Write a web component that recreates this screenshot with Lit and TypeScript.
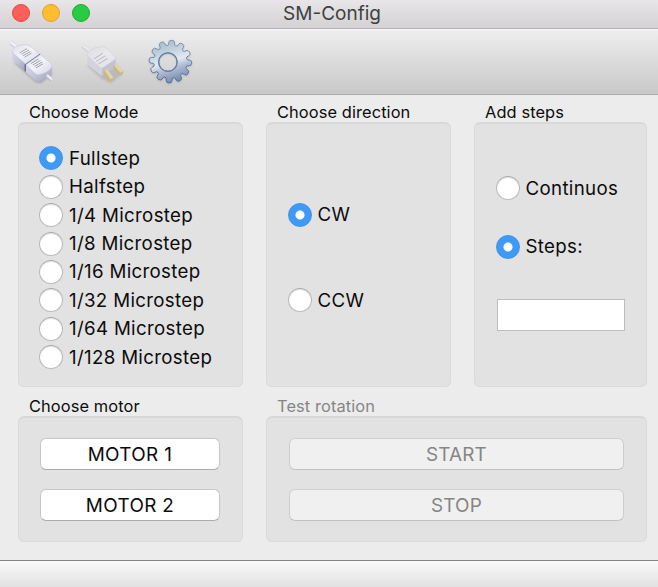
import { LitElement, html, css, svg } from "lit";
import { customElement, property } from "lit/decorators.js";

/** Outline of a cog with round-tipped teeth, centred on the origin. */
function cogPath(teeth: number, outer: number, root: number, offset: number): string {
  const step = 360 / teeth;
  const at = (r: number, deg: number) => {
    const a = ((deg - 90) * Math.PI) / 180;
    return `${(r * Math.cos(a)).toFixed(2)} ${(r * Math.sin(a)).toFixed(2)}`;
  };
  let d = "";
  for (let i = 0; i < teeth; i++) {
    const c = offset + i * step;
    d += `${i ? "L" : "M"}${at(root, c - step * 0.34)}`;
    d += `L${at(outer - 2.2, c - step * 0.29)}`;
    d += `Q${at(outer, c - step * 0.27)} ${at(outer, c)}`;
    d += `Q${at(outer, c + step * 0.27)} ${at(outer - 2.2, c + step * 0.29)}`;
    d += `L${at(root, c + step * 0.34)}`;
    d += `Q${at(root - 1, c + step * 0.5)} ${at(root, c + step * 0.66)}`;
  }
  return d + "Z";
}

const connectIcon = svg`
  <defs>
    <linearGradient id="c-top" x1="0" y1="0" x2="1" y2="1">
      <stop offset="0" stop-color="#dcdcea" /><stop offset=".45" stop-color="#f3f3fa" /><stop offset="1" stop-color="#d6d6e8" />
    </linearGradient>
    <linearGradient id="c-side" x1="0" y1="0" x2="1" y2="1">
      <stop offset="0" stop-color="#dadae8" /><stop offset=".5" stop-color="#c4c4d8" /><stop offset="1" stop-color="#9c9cba" />
    </linearGradient>
    <filter id="c-soft" x="-20%" y="-20%" width="140%" height="140%"><feGaussianBlur stdDeviation="1.2" /></filter>
  </defs>
  <path d="M8 27 L31 47.5 L36 48 L47 40 L46 34Z" fill="#666" opacity=".4" filter="url(#c-soft)" />
  <path d="M5.5 7.5 L14 14" stroke="#cfcfdb" stroke-width="4.4" />
  <path d="M5.8 7.2 L14 13.4" stroke="#f0f0f6" stroke-width="2.6" />
  <path d="M7 15 L7.3 25 L19.6 36 L21 29Z" fill="url(#c-side)" />
  <path d="M7 15.5 Q8 12.5 14 10.2 L21.5 9.6 Q23 9.8 25 11 L34.8 19 L20.6 29 L8.5 18.5Z" fill="url(#c-top)" stroke="#c3c3d6" stroke-width=".5" />
  <path d="M20.6 29.6 L20.3 36.5 L30 45.8 Q32 47.4 35 46.6 L45.5 39.5 Q46.6 38.5 46.8 36 L47.2 31 L33 38.5Z" fill="url(#c-side)" />
  <path d="M20.8 29.8 L35.4 19.6 L46 28.4 Q48 30.5 46.6 32.5 Q43 37.5 35 39.6 Q32 40.4 30 38.6Z" fill="url(#c-top)" stroke="#c0c0d5" stroke-width=".5" />
  <path d="M20.6 29.2 L35.2 19" stroke="#85859e" stroke-width="1" />
  <path d="M20.3 29.2 V36.6" stroke="#66668c" stroke-width="1.3" />
  <path d="M14.5 18 L22 13.5 M16.3 19.4 L24 14.9 M18 20.8 L25.5 16.4 M19.6 22.2 L26.5 18" stroke="#a4a4b3" stroke-width="1" />
  <path d="M26 28.5 L33.5 24 M27.8 30 L35.5 25.5 M29.5 31.4 L37.2 27 M31 32.8 L38 28.8" stroke="#9d9db0" stroke-width="1" />
  <path d="M41.5 40.5 L46.5 45" stroke="#bcbcd2" stroke-width="4" />
  <path d="M42 40 L47 44.4" stroke="#f0f2fb" stroke-width="2" />`;

const plugIcon = svg`
  <defs>
    <linearGradient id="p-top" x1="0" y1="0" x2="1" y2="1">
      <stop offset="0" stop-color="#dcdce2" /><stop offset=".5" stop-color="#e9e9ee" /><stop offset="1" stop-color="#dedee5" />
    </linearGradient>
    <filter id="p-soft" x="-20%" y="-20%" width="140%" height="140%"><feGaussianBlur stdDeviation="1.2" /></filter>
  </defs>
  <path d="M12 30 L28 44 L37 48 L49 39 L42 32Z" fill="#777" opacity=".28" filter="url(#p-soft)" />
  <path d="M8.3 10.8 L18 18" stroke="#d3d3d9" stroke-width="4.2" />
  <path d="M8.6 10.2 L18 17.2" stroke="#e8e8ed" stroke-width="2.6" />
  <path d="M13.2 19 L13.6 29.5 L27.6 41 L28.4 32.5Z" fill="#d3d3dc" />
  <path d="M27.6 41 L41.2 32.6 L41.9 23.3 L28.4 32.5Z" fill="#c3c3cf" />
  <path d="M13 20 Q13.5 16 20 13 L27 11.8 Q30 11.4 32 13.2 L41.9 22.3 L41.4 24.2 L28.8 32.8 Q27.4 33.4 26 32.2Z" fill="url(#p-top)" stroke="#cdcdd6" stroke-width=".5" />
  <path d="M19.8 24 L28.8 18.3 M21.9 26.6 L31.4 20.8 M24.3 29 L33.5 23.5" stroke="#bfbfc9" stroke-width="1.1" />
  <path d="M29 36.5 L33 33.8 L39.5 42.5 L38.5 45.5 L36 47 L33.5 45.4Z" fill="#c9b788" />
  <path d="M30.6 35.6 L33 33.8 L39.5 42.5 L36.6 44.2Z" fill="#e2d4ac" />
  <path d="M38.6 31.6 L42.4 28.6 L49.3 36 L49 38.4 L46 40.4 L43.4 38.8Z" fill="#c9b788" />
  <path d="M40 30.6 L42.4 28.6 L49.3 36 L46.4 37.8Z" fill="#e2d4ac" />`;

const gearIcon = svg`
  <defs>
    <linearGradient id="g-fill" gradientUnits="userSpaceOnUse" x1="-6" y1="-22" x2="8" y2="21">
      <stop offset="0" stop-color="#a3bacb" /><stop offset=".25" stop-color="#c0d0dd" />
      <stop offset=".5" stop-color="#e3e8f2" /><stop offset=".66" stop-color="#b0bdd5" /><stop offset="1" stop-color="#6a84ac" />
    </linearGradient>
    <linearGradient id="g-edge" x1="0" y1="0" x2="0" y2="1">
      <stop offset="0" stop-color="#7d99ac" /><stop offset="1" stop-color="#566c92" />
    </linearGradient>
    <filter id="g-soft" x="-20%" y="-20%" width="140%" height="140%"><feGaussianBlur stdDeviation="0.9" /></filter>
  </defs>
  <g transform="translate(27.4 26.6)">
    <path fill-rule="evenodd" fill="#666" opacity=".3" filter="url(#g-soft)" transform="translate(0 1)"
      d="${cogPath(12, 21.6, 17, 4)}M6.7 .5A9.2 9.2 0 1 0 -11.7 .5A9.2 9.2 0 1 0 6.7 .5Z" />
    <path fill-rule="evenodd" fill="url(#g-fill)" stroke="url(#g-edge)" stroke-width="1"
      d="${cogPath(12, 21.4, 17, 4)}M6.7 .5A9.2 9.2 0 1 0 -11.7 .5A9.2 9.2 0 1 0 6.7 .5Z" />
    <circle cx="-2.5" cy=".5" r="9.3" fill="none" stroke="#66829c" stroke-width="1.2" />
  </g>`;

@customElement("radio-option")
class RadioOption extends LitElement {
  @property() label = "";
  @property({ type: Boolean }) checked = false;

  static styles = css`
    :host {
      display: flex;
      align-items: center;
      height: 28.45px;
      gap: 6px;
      font-size: 18.7px;
      letter-spacing: 0.33px;
      white-space: nowrap;
    }
    .dot {
      box-sizing: border-box;
      flex: none;
      width: 24px;
      height: 24px;
      border: 1px solid #b9b9b9;
      border-top-color: #a9a9a9;
      border-radius: 50%;
      background: #fff;
      box-shadow: inset 0 1px 1px #ddd;
    }
    .on {
      border: 1px solid #3b93ee;
      background: radial-gradient(circle, #fff 4px, #3f9af6 5px);
      box-shadow: none;
    }
  `;

  render() {
    return html`<span class="dot ${this.checked ? "on" : ""}"></span><span>${this.label}</span>`;
  }
}

@customElement("group-box")
class GroupBox extends LitElement {
  @property() heading = "";

  static styles = css`
    :host {
      display: flex;
      flex-direction: column;
    }
    .heading {
      height: 22px;
      line-height: 24px;
      padding-left: 11px;
      font-size: 16.4px;
      letter-spacing: 0.1px;
      white-space: nowrap;
    }
    .box {
      box-sizing: border-box;
      flex: 1;
      display: flex;
      flex-direction: column;
      border: 1px solid #dadada;
      border-top: 2px solid #d8d8d8;
      border-radius: 6px;
      background: #e2e2e2;
    }
  `;

  render() {
    return html`<div class="heading">${this.heading}</div><div class="box"><slot></slot></div>`;
  }
}

@customElement("app-root")
class AppRoot extends LitElement {
  static styles = css`
    :host {
      display: flex;
      flex-direction: column;
      width: 658px;
      height: 587px;
      background: #ececec;
      color: #0c0c0c;
      font-family: Inter, "Liberation Sans", sans-serif;
      overflow: hidden;
    }
    .titlebar {
      box-sizing: border-box;
      display: grid;
      grid-template-columns: 1fr auto 1fr;
      align-items: center;
      height: 30px;
      padding: 0 6px 4px 12px;
      background: linear-gradient(#e8e6e8, #d3d1d3 28px, #adabad 28px, #b7b7b7 29px, #f6f6f6 29px);
      font-size: 19px;
      color: #3f3f3f;
    }
    .lights {
      display: flex;
      gap: 12px;
    }
    .light {
      box-sizing: border-box;
      width: 18px;
      height: 18px;
      border-radius: 50%;
      border: 1px solid #e2483f;
      background: #fe5f58;
    }
    .yellow {
      border-color: #e0a030;
      background: #ffbe2f;
    }
    .green {
      border-color: #1bae2d;
      background: #29cb42;
    }
    .title {
      padding-top: 1px;
    }
    .toolbar {
      box-sizing: border-box;
      display: flex;
      gap: 14px;
      height: 65px;
      padding: 5px 0 0 5px;
      border-bottom: 1px solid #acacac;
      background: linear-gradient(#eeeeee, #c8c8c8);
    }
    .tool {
      width: 55px;
      height: 55px;
    }
    .content {
      flex: 1;
      display: flex;
      flex-direction: column;
      gap: 7px;
      padding: 5px 11px 18px 18px;
    }
    .row {
      display: grid;
      gap: 23px;
    }
    .top {
      grid-template-columns: 225px 185px 173px;
      height: 287px;
    }
    .bottom {
      grid-template-columns: 225px 381px;
      flex: 1;
    }
    .modes {
      padding: 20px 0 0 20px;
    }
    .direction {
      display: flex;
      flex-direction: column;
      gap: 57px;
      padding: 76.5px 0 0 20.5px;
    }
    .steps {
      display: flex;
      flex-direction: column;
      gap: 30px;
      padding: 50px 0 0 20.5px;
    }
    .field {
      box-sizing: border-box;
      width: 128px;
      height: 32px;
      margin: 8px 0 0 1.5px;
      border: 1.5px solid #bcbcbc;
      background: #fff;
    }
    .buttons {
      display: flex;
      flex-direction: column;
      gap: 19px;
      padding: 20px 22px 0 21px;
    }
    .disabled .buttons {
      padding-left: 22px;
    }
    .button {
      box-sizing: border-box;
      display: flex;
      align-items: center;
      justify-content: center;
      height: 32px;
      border: 1px solid #c6c6c6;
      border-bottom: 1.5px solid #ababab;
      border-radius: 6px;
      background: #fff;
      font-size: 18.9px;
      letter-spacing: 0.35px;
    }
    .disabled {
      color: #858585;
    }
    .disabled .button {
      border-color: #d0d0d0 #cdcdcd #c2c2c2;
      background: #f0f0f0;
      letter-spacing: 0.15px;
    }
    .status {
      box-sizing: border-box;
      height: 27px;
      border-top: 1px solid #848484;
      background: linear-gradient(#fafafa, #e1e1e1);
    }
  `;

  private modes = [
    "Fullstep",
    "Halfstep",
    "1/4 Microstep",
    "1/8 Microstep",
    "1/16 Microstep",
    "1/32 Microstep",
    "1/64 Microstep",
    "1/128 Microstep",
  ];

  render() {
    return html`
      <div class="titlebar">
        <div class="lights">
          <span class="light"></span><span class="light yellow"></span><span class="light green"></span>
        </div>
        <div class="title">SM-Config</div>
        <div></div>
      </div>
      <div class="toolbar">
        <svg class="tool" viewBox="0 0 55 55">${connectIcon}</svg>
        <svg class="tool" viewBox="0 0 55 55">${plugIcon}</svg>
        <svg class="tool" viewBox="0 0 55 55">${gearIcon}</svg>
      </div>
      <div class="content">
        <div class="row top">
          <group-box heading="Choose Mode">
            <div class="modes">
              ${this.modes.map((m, i) => html`<radio-option label=${m} ?checked=${i === 0}></radio-option>`)}
            </div>
          </group-box>
          <group-box heading="Choose direction">
            <div class="direction">
              <radio-option label="CW" checked></radio-option>
              <radio-option label="CCW"></radio-option>
            </div>
          </group-box>
          <group-box heading="Add steps">
            <div class="steps">
              <radio-option label="Continuos"></radio-option>
              <radio-option label="Steps:" checked></radio-option>
              <div class="field"></div>
            </div>
          </group-box>
        </div>
        <div class="row bottom">
          <group-box heading="Choose motor">
            <div class="buttons">
              <div class="button">MOTOR 1</div>
              <div class="button">MOTOR 2</div>
            </div>
          </group-box>
          <group-box class="disabled" heading="Test rotation">
            <div class="buttons">
              <div class="button">START</div>
              <div class="button">STOP</div>
            </div>
          </group-box>
        </div>
      </div>
      <div class="status"></div>
    `;
  }
}
